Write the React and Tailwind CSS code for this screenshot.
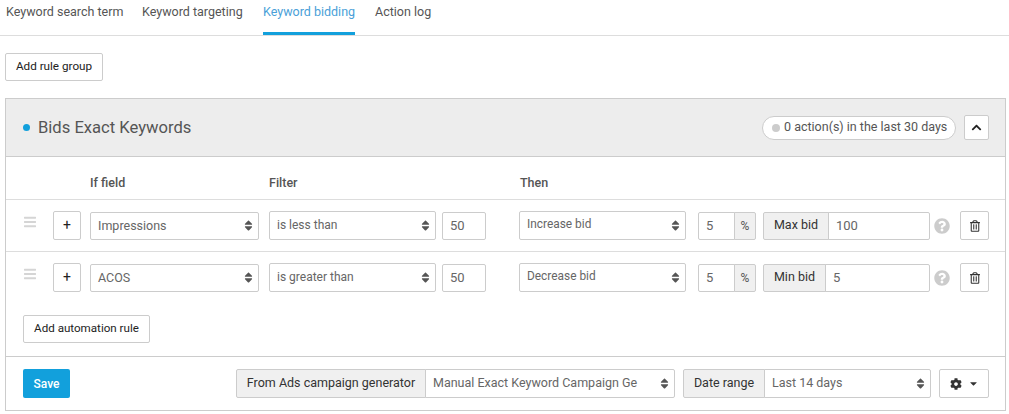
import { FaBars, FaChevronUp, FaCog, FaQuestionCircle, FaRegTrashAlt, FaSort, FaCaretDown } from 'react-icons/fa';

const tabs = [
    { label: 'Keyword search term', cls: 'w-[117px] mr-[19px] text-[#555]' },
    { label: 'Keyword targeting', cls: 'w-[101px] mr-[20px] text-[#555]' },
    { label: 'Keyword bidding', cls: 'w-[92px] mr-[20px] text-[#4a9fd8] border-b-[3px] border-[#12a0dc]' },
    { label: 'Action log', cls: 'w-[56px] text-[#555]' },
];

const Select = ({ value, className = '', textClass = '' }) => (
    <div className={`flex items-center justify-between bg-white border border-[#ccc] rounded-[2px] pl-[7px] pr-[5px] text-[#666] whitespace-nowrap ${className}`}>
        <span className={textClass}>{value}</span>
        <FaSort className="shrink-0 ml-1 w-[9px] h-[13px] text-[#555]" />
    </div>
);

const Addon = ({ label, className = '' }) => (
    <div className={`flex items-center justify-center h-full bg-[#f0f0f0] border border-[#ccc] text-[#333] ${className}`}>{label}</div>
);

const Rule = ({ field, filter, then, boundLabel, boundValue, addonWidth, inputWidth, border }) => (
    <div className={`flex items-center h-[52px] pl-[18px] ${border ? 'border-b border-[#ddd]' : 'pb-[1px]'}`}>
        <FaBars className="w-[12px] h-[14px] mr-[17px] -mt-[7px] text-[#d5d5d5]" />
        <button className="flex items-center justify-center w-[28px] h-[29px] mr-[9px] bg-white border border-[#ccc] rounded-[2px] text-[#222] text-[14px]">+</button>
        <Select value={field} className="w-[169px] h-[28px] text-[12.5px] mr-[10px]" textClass="pt-[1px]" />
        <Select value={filter} className="w-[167px] h-[29px] text-[12px] mr-[6px]" textClass="pb-[1px]" />
        <div className="flex items-center w-[44px] h-[28px] pl-[7px] border border-[#ccc] rounded-[2px] text-[13px] text-[#666] mr-[33px]">50</div>
        <Select value={then} className="w-[167px] h-[29px] text-[11.9px] mr-[12px]" textClass="pb-[1px]" />
        <div className="flex items-center h-[28px] mr-[7px]">
            <div className="flex items-center w-[37px] h-full pl-[7px] border border-[#ccc] rounded-l-[2px] text-[13px] text-[#666]">5</div>
            <Addon label="%" className="w-[22px] -ml-px rounded-r-[2px] text-[12px] text-[#555]" />
        </div>
        <div className="flex items-center h-[28px] text-[12.5px]">
            <Addon label={boundLabel} className={`${addonWidth} rounded-l-[2px]`} />
            <div className={`flex items-center ${inputWidth} h-full pl-[7px] -ml-px border border-[#ccc] rounded-r-[2px] text-[13px] text-[#666]`}>{boundValue}</div>
        </div>
        <FaQuestionCircle className="w-[16px] h-[16px] ml-[4px] mr-[10px] text-[#ccc]" />
        <button className="flex items-center justify-center w-[29px] h-[29px] bg-white border border-[#ccc] rounded-[2px] text-[#333]">
            <FaRegTrashAlt className="w-[10px] h-[12px]" />
        </button>
    </div>
);

export default function App() {
    return (
        <div className="w-[1009px] h-[414px] bg-white overflow-hidden font-['Roboto',sans-serif]">
            {/* Tabs */}
            <div className="flex h-[36px] pl-[6px] border-b border-[#ddd] text-[12.5px]">
                {tabs.map((tab) => (
                    <div key={tab.label} className={`h-[35px] pt-[3px] whitespace-nowrap ${tab.cls}`}>{tab.label}</div>
                ))}
            </div>

            <div className="pl-[5px] pr-[3px]">
                <button className="block w-[98px] h-[28px] mt-[17px] bg-white border border-[#ccc] rounded-[2px] text-[11.7px] text-[#222]">Add rule group</button>

                {/* Rule group */}
                <div className="mt-[17px] h-[313px] border border-[#ccc]">
                    <div className="flex items-center h-[58px] pl-[17px] pr-[16px] bg-[#ededed] border-b border-[#ccc]">
                        <span className="w-[7px] h-[7px] rounded-full bg-[#12a0dc] mr-[8px]" />
                        <span className="pt-[1px] text-[16.6px] text-[#555]">Bids Exact Keywords</span>
                        <div className="flex items-center w-[194px] h-[24px] ml-auto pl-[9px] bg-white border border-[#ccc] rounded-full text-[12.5px] text-[#555] whitespace-nowrap">
                            <span className="w-[8px] h-[8px] rounded-full bg-[#ccc] mr-[4px]" />
                            0 action(s) in the last 30 days
                        </div>
                        <button className="flex items-center justify-center w-[25px] h-[25px] ml-[8px] bg-white border border-[#ccc] rounded-[2px] text-[#222]">
                            <FaChevronUp className="w-[11px] h-[11px]" />
                        </button>
                    </div>

                    <div className="flex items-center h-[43px] pt-[10px] border-b border-[#ddd] text-[12.5px] font-medium text-[#555]">
                        <span className="ml-[84px] w-[179px]">If field</span>
                        <span className="w-[251px]">Filter</span>
                        <span>Then</span>
                    </div>

                    <Rule field="Impressions" filter="is less than" then="Increase bid" boundLabel="Max bid" boundValue="100" addonWidth="w-[66px]" inputWidth="w-[102px]" border />
                    <Rule field="ACOS" filter="is greater than" then="Decrease bid" boundLabel="Min bid" boundValue="5" addonWidth="w-[63px]" inputWidth="w-[105px]" />

                    <div className="h-[53px] pl-[17px] pt-[11px] border-b border-[#ccc]">
                        <button className="block w-[127px] h-[28px] bg-white border border-[#ccc] rounded-[2px] text-[11.6px] text-[#222]">Add automation rule</button>
                    </div>

                    {/* Footer */}
                    <div className="flex items-center h-[53px] pl-[17px] pr-[16px] text-[12.5px]">
                        <button className="w-[47px] h-[29px] mr-[166px] bg-[#12a0dc] rounded-[2px] text-[12px] font-medium text-white">Save</button>
                        <div className="flex items-center h-[29px] mr-[8px]">
                            <Addon label="From Ads campaign generator" className="w-[190px] rounded-l-[2px]" />
                            <Select value="Manual Exact Keyword Campaign Ge" className="w-[250px] h-full -ml-px rounded-l-none" />
                        </div>
                        <div className="flex items-center h-[29px] mr-[8px]">
                            <Addon label="Date range" className="w-[82px] rounded-l-[2px]" />
                            <Select value="Last 14 days" className="w-[167px] h-full -ml-px rounded-l-none" />
                        </div>
                        <button className="flex items-center justify-center w-[50px] h-[29px] bg-white border border-[#ccc] rounded-[2px] text-[#333]">
                            <FaCog className="w-[12px] h-[12px] mr-[7px]" />
                            <FaCaretDown className="w-[9px] h-[11px]" />
                        </button>
                    </div>
                </div>
            </div>
        </div>
    );
}
